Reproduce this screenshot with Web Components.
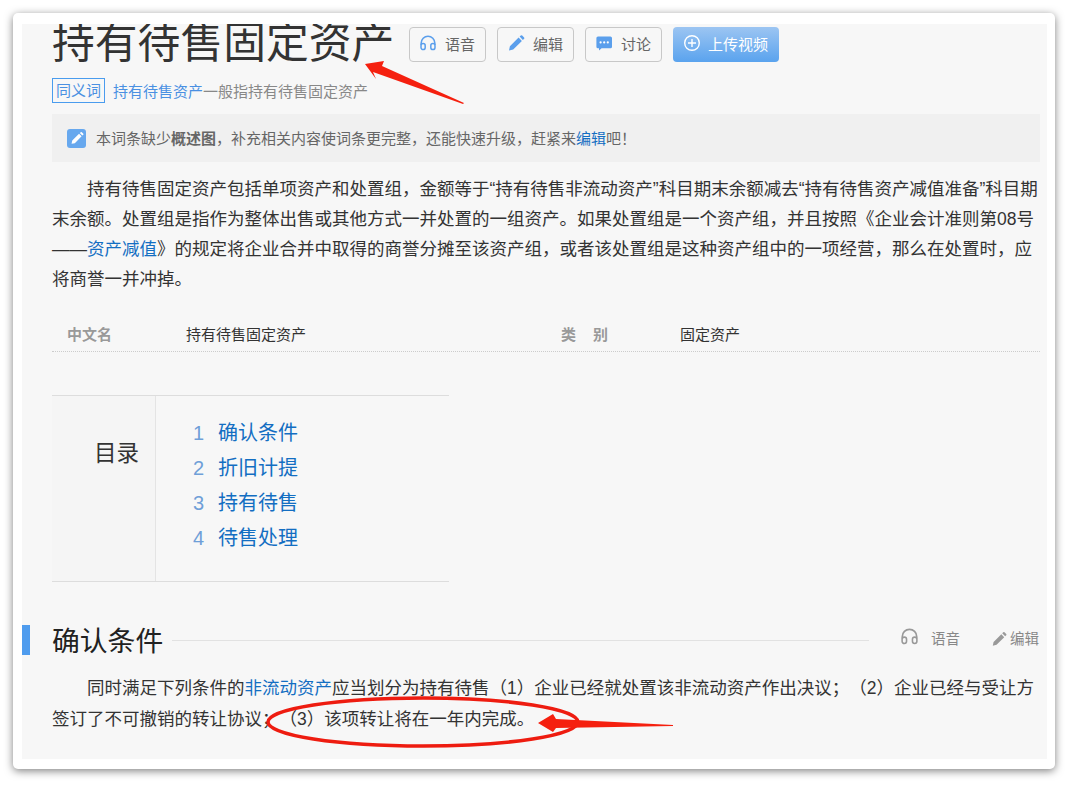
<!DOCTYPE html>
<html>
  <head>
    <title>持有待售固定资产</title>
    <meta charset="utf-8">
    <style>
      html, body { margin: 0; height: 790px; overflow: hidden; background: #fff; }
      body { font-family: "Liberation Sans", "Noto Sans CJK SC", sans-serif; color: #333; }
    </style>
  </head>
  <body>
    <shot-frame>
      <lemma-title>
        持有待售固定资产
        <lemma-btn slot="tools" icon="headphones">语音</lemma-btn>
        <lemma-btn slot="tools" icon="pencil">编辑</lemma-btn>
        <lemma-btn slot="tools" icon="chat">讨论</lemma-btn>
        <lemma-btn slot="tools" icon="plus" primary>上传视频</lemma-btn>
      </lemma-title>
      <synonym-row><lemma-link pale>持有待售资产</lemma-link>一般指持有待售固定资产</synonym-row>
      <notice-bar>本词条缺少<b>概述图</b>，补充相关内容使词条更完整，还能快速升级，赶紧来<lemma-link>编辑</lemma-link>吧！</notice-bar>
      <lemma-para>持有待售固定资产包括单项资产和处置组，金额等于“持有待售非流动资产”科目期末余额减去“持有待售资产减值准备”科目期末余额。处置组是指作为整体出售或其他方式一并处置的一组资产。如果处置组是一个资产组，并且按照《企业会计准则第08号——<lemma-link>资产减值</lemma-link>》的规定将企业合并中取得的商誉分摊至该资产组，或者该处置组是这种资产组中的一项经营，那么在处置时，应将商誉一并冲掉。</lemma-para>
      <info-row label1="中文名" value1="持有待售固定资产" label2="类　别" value2="固定资产"></info-row>
      <toc-box>
        <toc-item num="1">确认条件</toc-item>
        <toc-item num="2">折旧计提</toc-item>
        <toc-item num="3">持有待售</toc-item>
        <toc-item num="4">待售处理</toc-item>
      </toc-box>
      <section-head>确认条件</section-head>
      <lemma-para tight>同时满足下列条件的<lemma-link>非流动资产</lemma-link>应当划分为持有待售（1）企业已经就处置该非流动资产作出决议；（2）企业已经与受让方签订了不可撤销的转让协议；（3）该项转让将在一年内完成。</lemma-para>
    </shot-frame>
    <mark-layer></mark-layer>

    <script>
      const ICONS = {
        headphones: '<path d="M2.2 11V9a6.8 6.8 0 0 1 13.6 0v2" fill="none" stroke="currentColor" stroke-width="1.6"/><rect x="2" y="9.6" width="4.2" height="6" rx="2.1" fill="none" stroke="currentColor" stroke-width="1.5"/><rect x="11.8" y="9.6" width="4.2" height="6" rx="2.1" fill="none" stroke="currentColor" stroke-width="1.5"/>',
        pencil: '<path d="M2 16.5l.9-4.2L11.6 3.6l3.3 3.3-8.7 8.7zM12.6 2.6l1.2-1.1a1 1 0 0 1 1.4 0l1.9 1.9a1 1 0 0 1 0 1.4l-1.2 1.1z" fill="currentColor"/>',
        chat: '<path d="M3 2.5h12.4a1.6 1.6 0 0 1 1.6 1.6v8.6a1.6 1.6 0 0 1-1.6 1.6H6.6L4 16.6v-2.3H3a1.6 1.6 0 0 1-1.6-1.6V4.1A1.6 1.6 0 0 1 3 2.5z" fill="currentColor"/><circle cx="5.6" cy="8.4" r="1.1" fill="#fff"/><circle cx="9.2" cy="8.4" r="1.1" fill="#fff"/><circle cx="12.8" cy="8.4" r="1.1" fill="#fff"/>',
        plus: '<circle cx="9" cy="9" r="7.3" fill="none" stroke="currentColor" stroke-width="1.4"/><path d="M9 5v8M5 9h8" stroke="currentColor" stroke-width="1.4"/>'
      };

      function define(name, css, html) {
        customElements.define(name, class extends HTMLElement {
          connectedCallback() {
            if (this.shadowRoot) return;
            let root = this.attachShadow({ mode: 'open' });
            let body = typeof html === 'function' ? html(this) : html;
            root.innerHTML = `<style>${css}</style>${body}`;
          }
        });
      }

      define('shot-frame', `
        :host {
          display: block; box-sizing: border-box;
          width: 1042px; height: 756px; margin: 13px 0 0 13px;
          padding: 11px 8px 10px 9px;
          background: #fff; border-radius: 5px;
          box-shadow: 0 2px 9px rgba(0,0,0,.5);
        }
        .inner {
          box-sizing: border-box; height: 100%; overflow: hidden;
          background: #f7f7f7; padding: 0 7px 0 30px;
        }`, `<div class="inner"><slot></slot></div>`);

      define('lemma-title', `
        :host { display: flex; align-items: flex-start; height: 54px; }
        h1 {
          flex: none; width: 340px;
          margin: 0 17px 0 0; font-size: 42.8px; line-height: 38px; font-weight: 400;
          color: #333; white-space: nowrap;
        }
        .tools { display: flex; gap: 11px; margin-top: 3px; }`,
        `<h1><slot></slot></h1><div class="tools"><slot name="tools"></slot></div>`);

      define('lemma-btn', `
        :host {
          display: flex; align-items: center; justify-content: center; gap: 8px;
          box-sizing: border-box; width: 77px; height: 35px; padding: 0 1px 3px 0;
          border: 1px solid #c8c8c8; border-radius: 4px;
          font-size: 15px; color: #666; white-space: nowrap;
        }
        :host([primary]) {
          width: 106px; border: 0; color: #fff; gap: 7px;
          background: linear-gradient(to bottom, #9cc5f2, #5aa3ee);
        }
        svg { width: 18px; height: 18px; color: #5b9fec; flex: none; }
        :host([primary]) svg { color: #fff; }`,
        el => `<svg viewBox="0 0 18 18">${ICONS[el.getAttribute('icon')]}</svg><slot></slot>`);

      define('lemma-link', `
        :host { color: #136ec2; }
        :host([pale]) { color: #4a90e2; }`, `<slot></slot>`);

      define('synonym-row', `
        :host { display: flex; align-items: center; height: 24px; font-size: 15px; color: #888; }
        .tag {
          box-sizing: border-box; width: 53px; height: 25px; margin-right: 8px;
          border: 1px solid #4a9cee; color: #4a90e2; text-align: center; line-height: 23px;
          font-size: 15px;
        }`, `<span class="tag">同义词</span><span><slot></slot></span>`);

      define('notice-bar', `
        :host {
          display: flex; align-items: center; height: 48px; margin-top: 12px; box-sizing: border-box;
          padding: 0 0 2px 15px; background: #f0f0f0; font-size: 15px; color: #666;
        }
        .ic {
          width: 19px; height: 19px; margin: 2px 10px 0 0; border-radius: 3px; background: #67a8ee;
          display: flex; align-items: center; justify-content: center; color: #fff;
        }
        svg { width: 14px; height: 14px; }`,
        `<span class="ic"><svg viewBox="0 0 18 18">${ICONS.pencil}</svg></span><span><slot></slot></span>`);

      define('lemma-para', `
        :host {
          display: block; margin-top: 12px; font-size: 17.5px; line-height: 30px;
          text-indent: 2em; color: #333;
        }
        :host([tight]) { margin-top: 18px; line-height: 31px; text-spacing-trim: space-all; }`, `<slot></slot>`);

      define('info-row', `
        :host {
          display: grid; grid-template-columns: 119px 375px 119px 1fr;
          padding: 26px 0 1px 15px; line-height: 30px; font-size: 15px; color: #333;
          border-bottom: 1px dotted #ccc;
        }
        b { color: #999; }
        b.wide { letter-spacing: 1px; }`,
        el => `<b>${el.getAttribute('label1')}</b><span>${el.getAttribute('value1')}</span><b class="wide">${el.getAttribute('label2')}</b><span>${el.getAttribute('value2')}</span>`);

      define('toc-box', `
        :host {
          display: flex; box-sizing: border-box; width: 397px; height: 187px; margin-top: 43px;
          border-top: 1px solid #ddd; border-bottom: 1px solid #ddd;
        }
        .side {
          box-sizing: border-box; width: 104px; padding: 41px 16px 0 0; text-align: right;
          background: #f5f5f5; border-right: 1px solid #e4e4e4;
          font-size: 22.5px; line-height: 34px; color: #333;
        }
        .list { padding: 20px 0 0 37px; }`,
        `<div class="side">目录</div><div class="list"><slot></slot></div>`);

      define('toc-item', `
        :host { display: flex; height: 35px; line-height: 35px; font-size: 20px; color: #136ec2; }
        i { width: 25px; font-style: normal; color: #6f9fd8; }`,
        el => `<i>${el.getAttribute('num')}</i><span><slot></slot></span>`);

      define('section-head', `
        :host { display: flex; align-items: center; height: 30px; margin: 43px 0 0 -30px; }
        .bar { width: 8px; height: 30px; background: #4f9cee; margin-right: 22px; flex: none; }
        h2 {
          margin: 3px 9px 0 0; font-size: 27.8px; font-weight: 400; line-height: 30px;
          color: #222; white-space: nowrap;
        }
        .rule { flex: 1; height: 1px; background: #e2e2e2; }
        .tools {
          display: flex; align-items: center; width: 171px; box-sizing: border-box; padding-left: 31px;
          font-size: 14.5px; color: #888; white-space: nowrap; flex: none; margin-top: -5px;
        }
        svg { color: #999; flex: none; }
        .a { width: 19px; height: 19px; margin: -2px 12px 0 0; }
        .b { width: 16px; height: 16px; margin: 2px 3px 0 31px; }`,
        `<span class="bar"></span><h2><slot></slot></h2><span class="rule"></span>
         <div class="tools"><svg class="a" viewBox="0 0 18 18">${ICONS.headphones}</svg><span>语音</span><svg class="b" viewBox="0 0 18 18">${ICONS.pencil}</svg><span>编辑</span></div>`);

      define('mark-layer', `
        :host { position: absolute; left: 0; top: 0; width: 1068px; height: 790px; pointer-events: none; }
        svg { display: block; }`,
        `<svg width="1068" height="790" viewBox="0 0 1068 790">
           <polygon points="365,64 384,61 382,66 464,103 463,104 373,72 376,79" fill="#f5200f"/>
           <ellipse cx="423" cy="722" rx="155" ry="24" fill="none" stroke="#ee1c10" stroke-width="3.5"/>
           <polygon points="538,723 553,714 556,719 673,725 673,726 556,728 553,732" fill="#f5200f"/>
         </svg>`);
    </script>
  </body>
</html>
